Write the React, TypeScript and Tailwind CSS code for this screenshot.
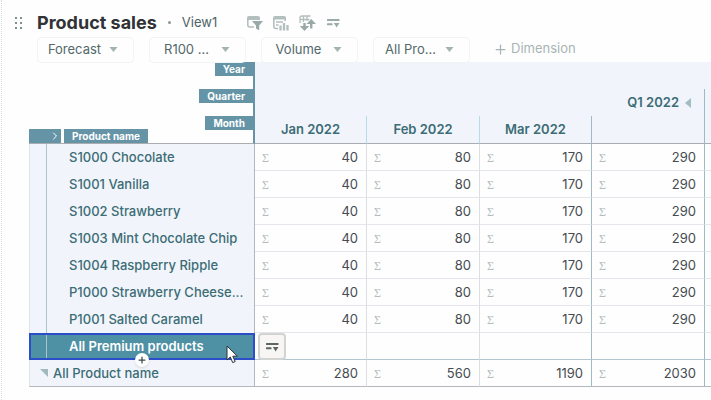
import { Plus, ChevronRight } from 'lucide-react';

interface Row {
  name: string;
  values: number[];
}

const rows: Row[] = [
  { name: 'S1000 Chocolate', values: [40, 80, 170, 290] },
  { name: 'S1001 Vanilla', values: [40, 80, 170, 290] },
  { name: 'S1002 Strawberry', values: [40, 80, 170, 290] },
  { name: 'S1003 Mint Chocolate Chip', values: [40, 80, 170, 290] },
  { name: 'S1004 Raspberry Ripple', values: [40, 80, 170, 290] },
  { name: 'P1000 Strawberry Cheese...', values: [40, 80, 170, 290] },
  { name: 'P1001 Salted Caramel', values: [40, 80, 170, 290] },
];

const totals = [280, 560, 1190, 2030];

const filters = [
  { label: 'Scenario', value: 'Forecast' },
  { label: 'Region', value: 'R100 ...' },
  { label: 'Measure', value: 'Volume' },
  { label: 'Product', value: 'All Pro...' },
];

// Month columns are closed by a light line, quarter columns by a stronger one
const cellLines = ['border-r-[#d9dfe4]', 'border-r-[#d9dfe4]', 'border-r-[#9fb9c6]', 'border-r-[#9fb9c6]'];

function FilterIcon() {
  return (
    <svg width="16" height="16" viewBox="0 0 16 16" fill="none">
      <path d="M0 5V3a2 2 0 0 1 2-2h9a2 2 0 0 1 2 2v2z" fill="#b3bfbd" />
      <path d="M.8 4v6a2 2 0 0 0 2 2H7" stroke="#b3bfbd" strokeWidth="1.600" />
      <path d="M5 6h11l-3.800 4.600v4.900l-3.200-2v-2.900z" fill="#98a9a7" />
    </svg>
  );
}

function ChartIcon() {
  return (
    <svg width="16" height="16" viewBox="0 0 16 16" fill="none" stroke="#b3bfbd">
      <path d="M0 4.500V3a2 2 0 0 1 2-2h9a2 2 0 0 1 2 2v1.500z" fill="#b3bfbd" stroke="none" />
      <path d="M.8 4v7.500a2 2 0 0 0 2 2H5M12.200 4v2" strokeWidth="1.600" />
      <path d="M3 7h7M3 10h2.500" strokeWidth="1.400" />
      <path d="M7.500 10.500V15.500M11 8V15.500M14.500 10V15.500" strokeWidth="2.300" />
    </svg>
  );
}

function SwapIcon() {
  return (
    <svg width="17" height="16" viewBox="0 0 17 16" fill="none" stroke="#b3bfbd">
      <path d="M1 8V3a2 2 0 0 1 2-2h8.500M1 4.500h9.500M4.500 1v6M8 1v5" strokeWidth="1.300" />
      <path d="M5.500 8V12" stroke="#98a9a7" strokeWidth="2.400" />
      <path d="M.8 11h9.400L5.500 16z" fill="#98a9a7" stroke="none" />
      <path d="M12.200 13.500V8" stroke="#98a9a7" strokeWidth="2.400" />
      <path d="M7.600 9H17L12.200 4z" fill="#98a9a7" stroke="none" />
    </svg>
  );
}

function MenuIcon({ className }: { className: string }) {
  return (
    <svg width="14" height="10" viewBox="0 0 14 10" className={className} fill="currentColor">
      <rect x="1" y="1" width="12.500" height="2" rx=".5" />
      <rect x="1" y="5.200" width="5.500" height="2" rx=".5" />
      <path d="M7.800 5h5.700L10.600 9.400z" />
    </svg>
  );
}

function Tag({ children }: { children: string }) {
  return (
    <span className="block h-[14px] bg-[#6494a6] px-2 text-[10px] leading-[14px] font-bold text-white">
      {children}
    </span>
  );
}

function ValueCell({ value, index }: { value: number; index: number }) {
  return (
    <td className={`border-r px-[7px] py-0 ${cellLines[index]}`}>
      <div className="flex items-center justify-between pt-px pr-px">
        <span className="font-['Liberation_Serif',serif] text-xs text-[#b3bcc0]">Σ</span>
        <span className="text-[13px] text-[#454b50]">{value}</span>
      </div>
    </td>
  );
}

export default function App() {
  return (
    <main className="min-h-screen bg-[#fefefe] pl-px font-['Inter',sans-serif]">
      <div className="min-h-screen border-l border-dotted border-[#d5dce8] pl-[27px]">
        <header className="flex h-9 items-center pt-[9px]">
          <button aria-label="Move" className="-ml-4 mr-3">
            <svg width="12" height="14" viewBox="0 0 12 14" fill="#7b9190">
              <rect x="2" y="1" width="2" height="2" /><rect x="7" y="1" width="2" height="2" />
              <rect x="2" y="6" width="2" height="2" /><rect x="7" y="6" width="2" height="2" />
              <rect x="2" y="11" width="2" height="2" /><rect x="7" y="11" width="2" height="2" />
            </svg>
          </button>
          <h1 className="text-lg font-bold text-[#303235]">Product sales</h1>
          <span className="mx-[11px] size-[3px] rounded-full bg-[#8a9896]" />
          <span className="text-[13px] text-[#4d6264]">View1</span>
          <div className="ml-[30px] flex items-center gap-[10px]">
            <button aria-label="Filter"><FilterIcon /></button>
            <button aria-label="Chart"><ChartIcon /></button>
            <button aria-label="Swap axes"><SwapIcon /></button>
            <button aria-label="More"><MenuIcon className="text-[#9aaba9]" /></button>
          </div>
        </header>

        <div className="flex h-[26px] items-center gap-[15px] pl-2">
          {filters.map((filter) => (
            <label key={filter.label} className="relative block h-[26px] w-[97px]">
              <select
                aria-label={filter.label}
                className="h-full w-full appearance-none rounded border border-[#f1f4f5] bg-transparent pr-[22px] text-center text-[13px] text-[#52686a] [text-align-last:center]"
              >
                <option>{filter.value}</option>
              </select>
              <svg width="9" height="5" viewBox="0 0 8 5" className="pointer-events-none absolute top-[11px] right-4">
                <path d="M0 0h8L4 5z" fill="#a3b3b1" />
              </svg>
            </label>
          ))}
          <button className="ml-2 flex items-center gap-[3px] text-[13px] text-[#a9b4b4]">
            <Plus size={15} strokeWidth={2} />
            Dimension
          </button>
        </div>

        <table className="w-full table-fixed border-separate border-spacing-0">
          <colgroup>
            <col className="w-[226px]" />
            <col className="w-[112px]" />
            <col className="w-[113px]" />
            <col className="w-[112px]" />
            <col className="w-[113px]" />
            <col />
          </colgroup>
          <thead className="text-[13px] font-semibold text-[#3c6c75]">
            <tr className="h-[27px]">
              <th className="border-r-2 border-[#6494a6] p-0 align-top">
                <div className="flex justify-end"><Tag>Year</Tag></div>
              </th>
              <th colSpan={5} className="bg-[#f1f5fb]" />
            </tr>
            <tr className="h-[27px]">
              <th className="border-r-2 border-[#6494a6] p-0 align-top">
                <div className="flex justify-end"><Tag>Quarter</Tag></div>
              </th>
              <th colSpan={4} className="border-r border-[#9fb9c6] bg-[#f1f5fb] py-0 pr-[13px] font-semibold">
                <button className="ml-auto flex items-center gap-[6px]">
                  Q1 2022
                  <svg width="6" height="10" viewBox="0 0 6 10"><path d="M6 0v10L0 5z" fill="#a0bdc2" /></svg>
                </button>
              </th>
              <th className="bg-[#f1f5fb]" />
            </tr>
            <tr className="h-7">
              <th className="border-r-2 border-b border-r-[#6494a6] border-b-[#a9adb2] p-0 align-top">
                <div className="flex h-[27px] justify-between">
                  <div className="flex items-end gap-[3px]">
                    <button aria-label="Expand rows" className="flex h-[14px] w-8 items-center justify-end bg-[#6494a6] text-white">
                      <ChevronRight size={12} strokeWidth={2} />
                    </button>
                    <Tag>Product name</Tag>
                  </div>
                  <Tag>Month</Tag>
                </div>
              </th>
              <th className="border-r border-b border-r-[#b4dde6] border-b-[#a9adb2] bg-[#f1f5fb] p-0 font-semibold">Jan 2022</th>
              <th className="border-r border-b border-r-[#b4dde6] border-b-[#a9adb2] bg-[#f1f5fb] p-0 font-semibold">Feb 2022</th>
              <th className="border-r border-b border-r-[#9fb9c6] border-b-[#a9adb2] bg-[#f1f5fb] p-0 font-semibold">Mar 2022</th>
              <th className="border-r border-b border-r-[#9fb9c6] border-b-[#a9adb2] bg-[#f1f5fb]" />
              <th className="border-b border-[#a9adb2] bg-[#f1f5fb]" />
            </tr>
          </thead>
          <tbody>
            {rows.map((row) => (
              <tr key={row.name} className="h-[27px] [&>td]:border-b [&>td]:border-b-[#e3e7ec]">
                <th className="border-r border-l border-r-[#b4b8bd] border-l-[#dfe4ec] bg-[#f1f5fb] p-0 text-left">
                  <div className="ml-4 h-[27px] truncate border-l border-[#a9c5c8] pl-[22px] text-[13px] leading-[26px] font-medium text-[#3c6c75]">
                    {row.name}
                  </div>
                </th>
                {row.values.map((value, i) => (
                  <ValueCell key={i} value={value} index={i} />
                ))}
                <td />
              </tr>
            ))}
            <tr className="h-[27px] [&>td]:border-b [&>td]:border-b-[#b3c5cf]">
              <th className="relative border-2 border-[#2c4fc9] bg-[#4f91a4] p-0 text-left">
                <div className="ml-[15px] h-[23px] border-l border-[#a9c5c8] pl-[22px] text-[13px] leading-[23px] font-semibold text-white">
                  All Premium products
                </div>
                <button aria-label="Add item" className="absolute top-[18px] left-1/2 flex size-[14px] -translate-x-1/2 items-center justify-center rounded-full bg-white text-[#3b4a4e] shadow">
                  <Plus size={10} strokeWidth={3} />
                </button>
                <svg width="13" height="19" viewBox="0 0 13 19" className="absolute top-[10px] right-[14px]">
                  <path d="M1 1v14l3.300-3 2.400 5.600 2.500-1.100-2.400-5.300h4.600z" fill="#fff" stroke="#283238" strokeWidth="1" />
                </svg>
              </th>
              <td className="relative border-r border-r-[#d9dfe4] p-0">
                <button aria-label="Row options" className="absolute top-0 left-[3px] flex h-[27px] w-[28px] items-center justify-center rounded border-2 border-[#d3d3d1] bg-[#f7f6f4]">
                  <MenuIcon className="text-[#5a6664]" />
                </button>
              </td>
              <td className="border-r border-r-[#d9dfe4]" />
              <td className="border-r border-r-[#9fb9c6]" />
              <td className="border-r border-r-[#9fb9c6]" />
              <td />
            </tr>
            <tr className="h-[27px] [&>td]:border-b [&>td]:border-b-[#b4b8bd]">
              <th className="border-r border-b border-l border-r-[#b4b8bd] border-b-[#b4b8bd] border-l-[#dfe4ec] bg-[#f1f5fb] p-0 text-left">
                <button className="flex items-center gap-[5px] pl-[10px] text-[13px] leading-[26px] font-medium text-[#3c6c75]">
                  <svg width="8" height="8" viewBox="0 0 8 8"><path d="M0 0h8v8z" fill="#a0b9bc" /></svg>
                  All Product name
                </button>
              </th>
              {totals.map((value, i) => (
                <ValueCell key={i} value={value} index={i} />
              ))}
              <td />
            </tr>
          </tbody>
        </table>
      </div>
    </main>
  );
}
